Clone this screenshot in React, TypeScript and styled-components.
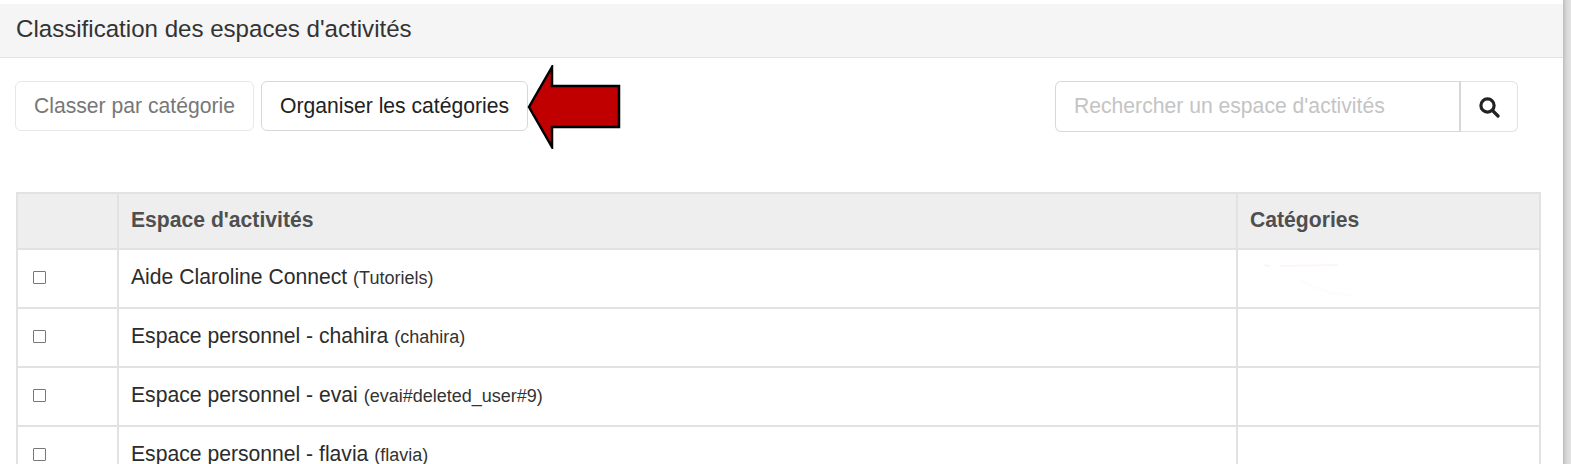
import React from "react";
import styled, { createGlobalStyle } from "styled-components";

const Global = createGlobalStyle`
  html, body { margin: 0; padding: 0; background: #fff; }
  body { font-family: "Liberation Sans", Arial, sans-serif; color: #333; }
  #root { width: 1571px; height: 464px; overflow: hidden; }
`;
const Page = styled.div`
  display: flex; width: 1571px; height: 464px; overflow: hidden; background: #fff;
`;
const Main = styled.main`
  width: 1563px; flex: none; padding-top: 4px; box-sizing: border-box;
`;
const Edge = styled.div`
  flex: 1; background: linear-gradient(to right, #bdbdbd, #d6d6d6 40%, #e4e4e4);
`;
const Heading = styled.header`
  height: 54px; box-sizing: border-box; background: #f5f5f5; border-bottom: 1px solid #e3e3e3;
  padding: 0 0 3px 16px; display: flex; align-items: center;
  font-size: 24.1px; color: #333;
`;
const Toolbar = styled.div`
  display: flex; justify-content: space-between; align-items: flex-start;
  padding: 23px 45px 0 15px; height: 134px; box-sizing: border-box;
`;
const Buttons = styled.div`
  position: relative; display: flex; gap: 7px;
`;
const ActionButton = styled.button<{ $muted?: boolean }>`
  height: 50px; padding: 0 18px; background: #fff; border: 1px solid ${p => p.$muted ? "#e8e8e8" : "#d8d8d8"};
  border-radius: 6px; font: 21.15px "Liberation Sans", Arial, sans-serif;
  color: ${p => p.$muted ? "#777" : "#222"};
`;
const Arrow = styled.svg`
  position: absolute; left: 100%; top: -16px; margin-left: -1px;
`;
const Search = styled.div`
  display: flex; width: 463px; height: 51px; box-sizing: border-box;
`;
const SearchInput = styled.input`
  flex: 1; min-width: 0; box-sizing: border-box; padding: 0 18px 2px; border: 1px solid #d8d8d8; border-right-width: 2px;
  border-radius: 6px 0 0 6px; font: 21.15px "Liberation Sans", Arial, sans-serif; outline: none;
  &::placeholder { color: #c4c4c4; opacity: 1; }
`;
const SearchButton = styled.button`
  width: 57px; flex: none; padding: 0; background: #fff; border: 1px solid #e2e2e2; border-left: 0;
  border-radius: 0 6px 6px 0; display: flex; align-items: center; justify-content: center;
`;
const Table = styled.table`
  margin-left: 16px; width: 1525px; table-layout: fixed; border-collapse: collapse;
`;
const Head = styled.th`
  height: 56px; padding: 0 12px 2px; box-sizing: border-box; background: #eee; border: 2px solid #e2e2e2;
  text-align: left; font-size: 21.15px; font-weight: bold; color: #4f4f4f;
`;
const Cell = styled.td`
  height: 59px; padding: 0 12px 3px; box-sizing: border-box; border: 2px solid #e2e2e2; font-size: 21.15px; color: #2c2c2c;
`;
const BoxCell = styled(Cell)`
  padding-left: 15px;
`;
const Check = styled.span`
  display: block; width: 11px; height: 11px; border: 1px solid #777; border-radius: 1px; background: #fff;
`;
const Code = styled.span`
  font-size: 18px; color: #333;
`;
const Smudge = styled.svg`
  display: block;
`;

const rows = [
  ["Aide Claroline Connect", "(Tutoriels)"],
  ["Espace personnel - chahira", "(chahira)"],
  ["Espace personnel - evai", "(evai#deleted_user#9)"],
  ["Espace personnel - flavia", "(flavia)"],
];

export default function App() {
  return (
    <Page>
      <Global />
      <Main>
        <Heading>Classification des espaces d'activités</Heading>
        <Toolbar>
          <Buttons>
            <ActionButton $muted>Classer par catégorie</ActionButton>
            <ActionButton>Organiser les catégories</ActionButton>
            <Arrow width="94" height="84" viewBox="0 0 94 84">
              <path d="M25 2 L2 42 L25 82 L25 62 L92 62 L92 21 L25 21 Z" fill="#c00000" stroke="#000" strokeWidth="2.5" />
            </Arrow>
          </Buttons>
          <Search>
            <SearchInput placeholder="Rechercher un espace d'activités" />
            <SearchButton aria-label="Rechercher">
              <svg width="22" height="22" viewBox="0 0 22 22" fill="none" stroke="#222" strokeWidth="3.2">
                <circle cx="9.5" cy="9.5" r="6.6" />
                <path d="M14.5 14.5 L20 20" strokeLinecap="round" />
              </svg>
            </SearchButton>
          </Search>
        </Toolbar>
        <Table>
          <colgroup>
            <col style={{ width: 101 }} />
            <col style={{ width: 1119 }} />
            <col />
          </colgroup>
          <thead>
            <tr>
              <Head />
              <Head>Espace d'activités</Head>
              <Head>Catégories</Head>
            </tr>
          </thead>
          <tbody>
            {rows.map(([name, code], i) => (
              <tr key={name}>
                <BoxCell><Check /></BoxCell>
                <Cell>{name} <Code>{code}</Code></Cell>
                <Cell>
                  {i === 0 && (
                    <Smudge width="110" height="44" viewBox="0 0 110 44" fill="none">
                      <path d="M30 11 L88 10" stroke="#fdf6f6" strokeWidth="2" />
                      <path d="M14 10 L20 11" stroke="#f9f5f5" strokeWidth="2" />
                      <path d="M50 26 L80 38 L102 40" stroke="#fdfdfd" strokeWidth="3" />
                    </Smudge>
                  )}
                </Cell>
              </tr>
            ))}
          </tbody>
        </Table>
      </Main>
      <Edge />
    </Page>
  );
}
